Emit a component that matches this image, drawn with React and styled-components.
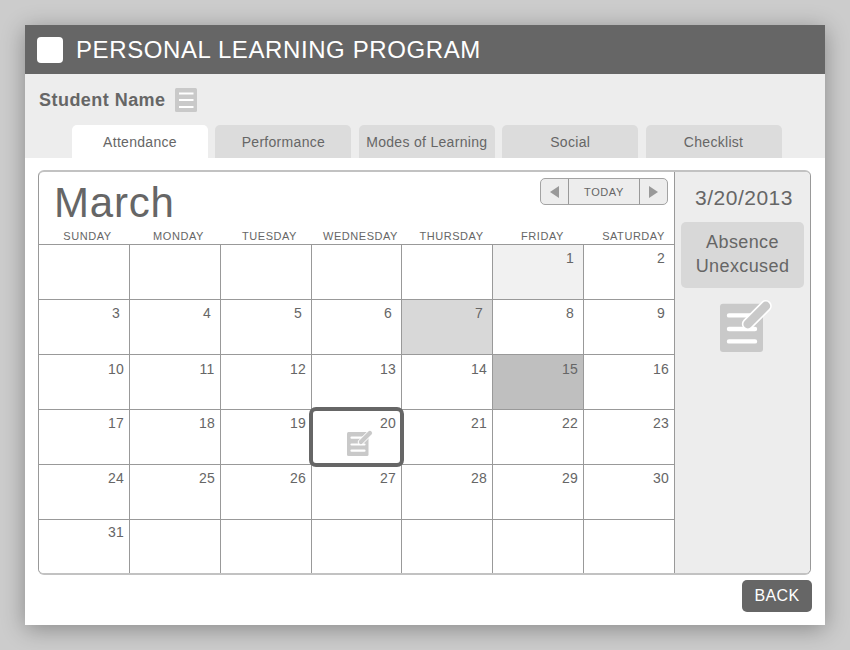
import React from "react";
import styled, { createGlobalStyle } from "styled-components";

const GlobalStyle = createGlobalStyle`
  * { box-sizing: border-box; }
  body {
    margin: 0;
    background: #ccc;
    color: #666;
    font-family: "Liberation Sans", Arial, sans-serif;
  }
  button {
    margin: 0;
    padding: 0;
    border: 0;
    color: inherit;
    font: inherit;
    letter-spacing: inherit;
  }
`;

const Stage = styled.div`
  height: 650px;
  padding: 25px;
  overflow: hidden;
`;

const Window = styled.main`
  display: flex;
  flex-direction: column;
  width: 800px;
  height: 600px;
  background: #fff;
  box-shadow: 0 4px 22px rgba(0, 0, 0, 0.33);
`;

const TitleBar = styled.header`
  display: flex;
  align-items: center;
  gap: 13px;
  height: 49px;
  padding: 0 12px;
  background: #666;
  color: #fff;
`;

const Logo = styled.div`
  width: 26px;
  height: 26px;
  border-radius: 4px;
  background: #fff;
`;

const Title = styled.h1`
  margin: 1px 0 0;
  font-size: 24px;
  font-weight: 400;
  line-height: 28px;
  letter-spacing: 0.6px;
  white-space: nowrap;
`;

const SubHeader = styled.section`
  display: flex;
  flex-direction: column;
  justify-content: space-between;
  height: 84px;
  padding: 14px 0 0 14px;
  background: #ededed;
`;

const Student = styled.div`
  display: flex;
  align-items: center;
  gap: 9px;
  height: 24px;
  font-size: 18px;
  font-weight: 700;
  letter-spacing: 0.46px;
`;

const Tabs = styled.nav`
  display: flex;
  gap: 7.4px;
  height: 33px;
  margin-left: 33px;
`;

const Tab = styled.button`
  width: 136px;
  height: 33px;
  border-radius: 5px 5px 0 0;
  background: ${(p) => (p.$active ? "#fff" : "#dcdcdc")};
  font-size: 14px;
  letter-spacing: 0.3px;
  white-space: nowrap;
`;

const Panel = styled.section`
  display: flex;
  width: 773px;
  height: 405px;
  margin: 12px 0 0 13px;
  border: solid #999;
  border-width: 2px 1px;
  border-top-color: #c2c2c2;
  border-bottom-color: #c2c2c2;
  border-radius: 6px;
  overflow: hidden;
`;

const Calendar = styled.div`
  width: 636px;
  border-right: 1px solid #999;
`;

const CalendarHead = styled.div`
  display: flex;
  justify-content: space-between;
  height: 56px;
  padding: 6px 6px 0 15px;
`;

const Month = styled.h2`
  margin: 0;
  font-size: 42px;
  font-weight: 400;
  line-height: 50px;
  letter-spacing: 0.8px;
`;

const Pager = styled.div`
  display: flex;
  width: 128px;
  height: 27px;
  border: 1px solid #a3a3a3;
  border-radius: 5px;
  background: #ededed;
  overflow: hidden;
`;

const PagerButton = styled.button`
  display: flex;
  flex: ${(p) => (p.$wide ? "1" : "0 0 27px")};
  align-items: center;
  justify-content: center;
  background: none;
  font-size: 11px;
  letter-spacing: 0.6px;

  & + & {
    border-left: 1px solid #999;
  }

  &:last-child {
    flex-basis: 28px;
  }
`;

const columns = "91px 91px 91px 90px 91px 91px 90px";

const Weekdays = styled.div`
  display: grid;
  grid-template-columns: repeat(7, 91px);
  height: 17px;
  padding-left: 3px;
  border-bottom: 1px solid #999;
  font-size: 11px;
  line-height: 17px;
  letter-spacing: 0.55px;
  text-align: center;
`;

const Grid = styled.div`
  display: grid;
  grid-template-columns: ${columns};
  grid-auto-rows: 55px;
`;

const dayFill = {
  light: "#f1f1f1",
  medium: "#d8d8d8",
  dark: "#bfbfbf",
};

const Day = styled.div`
  position: relative;
  display: flex;
  flex-direction: column;
  align-items: flex-end;
  padding-top: ${(p) => p.$top}px;
  border-right: 1px solid #999;
  border-bottom: 1px solid #999;
  background: ${(p) => dayFill[p.$fill] || "#fff"};

  &:nth-child(7n) {
    border-right: 0;
  }

  &:nth-child(n + 36) {
    border-bottom: 0;
  }
`;

const DayNumber = styled.span`
  width: 26px;
  font-size: 14px;
  line-height: 16px;
  letter-spacing: 0.2px;
  text-align: center;
`;

const Selection = styled.div`
  position: absolute;
  z-index: 1;
  inset: -3px;
  border: 4px solid #666;
  border-radius: 7px;
`;

const DayNote = styled.div`
  position: absolute;
  left: 35px;
  top: 20px;
  height: 26px;
`;

const Sidebar = styled.aside`
  display: flex;
  flex: 1;
  flex-direction: column;
  align-items: center;
  background: #ededed;
`;

const SelectedDate = styled.div`
  margin: 13px 0 0 3px;
  font-size: 21px;
  line-height: 25px;
  letter-spacing: 0.5px;
`;

const Status = styled.div`
  width: 123px;
  height: 66px;
  margin-top: 12px;
  padding-top: 8px;
  border-radius: 5px;
  background: #d8d8d8;
  font-size: 18px;
  line-height: 24px;
  letter-spacing: 0.4px;
  text-align: center;
`;

const SidebarNote = styled.div`
  margin: 12px 0 0 7px;
  height: 52px;
`;

const Footer = styled.footer`
  display: flex;
  justify-content: flex-end;
  padding: 5px 13px 0 0;
`;

const BackButton = styled.button`
  width: 70px;
  height: 32px;
  padding-bottom: 1px;
  border-radius: 5px;
  background: #666;
  color: #fff;
  font-size: 16px;
  letter-spacing: 0.4px;
`;

const Icon = styled.svg`
  display: block;
  flex: none;
  overflow: visible;
`;

function ListIcon() {
  return (
    <Icon width="22" height="24" viewBox="0 0 22 24">
      <rect width="22" height="24" rx="1.5" fill="#c9c9c9" />
      <path d="M4 5.5h14.5M4 12h14.5M4 19h14.5" stroke="#fff" strokeWidth="2" />
    </Icon>
  );
}

function NoteIcon({ size }) {
  return (
    <Icon width={size} height={size} viewBox="0 0 52 52">
      <rect y="3.8" width="43" height="48.2" rx="3" fill="#c9c9c9" />
      <g strokeLinecap="round" fill="none">
        <path d="M9 15.4h26M9 29h26M9 41.4h26" stroke="#fff" strokeWidth="4.4" />
        <path d="M27.8 24L45.8 6" stroke="#fff" strokeWidth="12" />
        <path d="M27.8 24L45.8 6" stroke="#c9c9c9" strokeWidth="8.8" />
      </g>
    </Icon>
  );
}

function Arrow({ direction }) {
  return (
    <Icon width="9" height="12" viewBox="0 0 9 12">
      <path d={direction === "left" ? "M9 0v12L0 6z" : "M0 0v12l9-6z"} fill="#999" />
    </Icon>
  );
}

const tabs = ["Attendance", "Performance", "Modes of Learning", "Social", "Checklist"];
const weekdays = ["SUNDAY", "MONDAY", "TUESDAY", "WEDNESDAY", "THURSDAY", "FRIDAY", "SATURDAY"];
const fills = { 1: "light", 7: "medium", 15: "dark" };
const rowTops = [5, 5, 6, 5, 5, 4];
const firstColumn = 5;
const selected = 20;

const cells = Array.from({ length: 42 }, (_, i) => {
  const day = i - firstColumn + 1;
  return { key: i, day: day >= 1 && day <= 31 ? day : null, top: rowTops[Math.floor(i / 7)] };
});

export default function App() {
  return (
    <Stage>
      <GlobalStyle />
      <Window>
        <TitleBar>
          <Logo />
          <Title>PERSONAL LEARNING PROGRAM</Title>
        </TitleBar>
        <SubHeader>
          <Student>
            <span>Student Name</span>
            <ListIcon />
          </Student>
          <Tabs>
            {tabs.map((name, i) => (
              <Tab key={name} $active={i === 0}>{name}</Tab>
            ))}
          </Tabs>
        </SubHeader>
        <Panel>
          <Calendar>
            <CalendarHead>
              <Month>March</Month>
              <Pager>
                <PagerButton aria-label="Previous month"><Arrow direction="left" /></PagerButton>
                <PagerButton $wide>TODAY</PagerButton>
                <PagerButton aria-label="Next month"><Arrow direction="right" /></PagerButton>
              </Pager>
            </CalendarHead>
            <Weekdays>
              {weekdays.map((name) => <span key={name}>{name}</span>)}
            </Weekdays>
            <Grid>
              {cells.map(({ key, day, top }) => (
                <Day key={key} $top={top} $fill={fills[day]}>
                  {day && <DayNumber>{day}</DayNumber>}
                  {day === selected && (
                    <>
                      <Selection />
                      <DayNote><NoteIcon size={26} /></DayNote>
                    </>
                  )}
                </Day>
              ))}
            </Grid>
          </Calendar>
          <Sidebar>
            <SelectedDate>3/20/2013</SelectedDate>
            <Status>Absence<br />Unexcused</Status>
            <SidebarNote><NoteIcon size={52} /></SidebarNote>
          </Sidebar>
        </Panel>
        <Footer>
          <BackButton>BACK</BackButton>
        </Footer>
      </Window>
    </Stage>
  );
}
